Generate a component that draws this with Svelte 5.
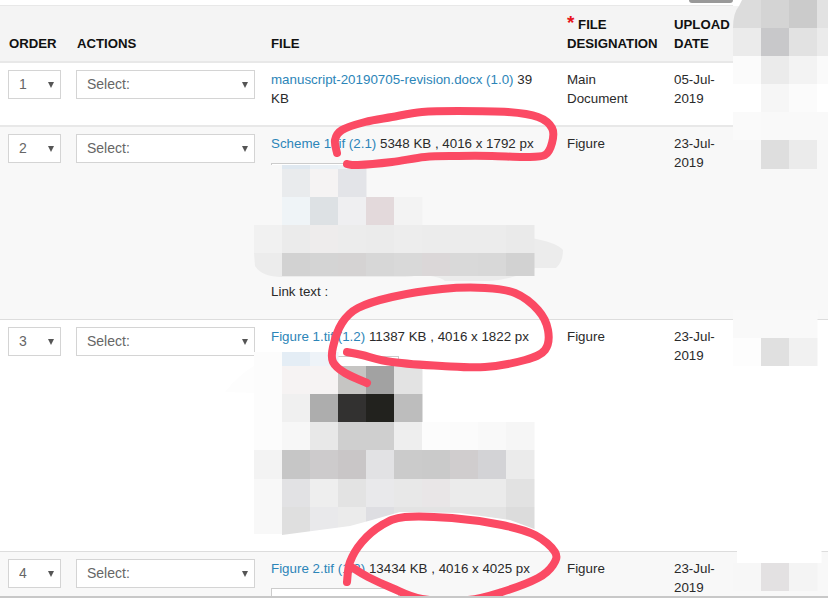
<script>
  const rows = [
    { n: 1, name: 'manuscript-20190705-revision.docx (1.0)', size: '39 KB', kind: 'Main Document', date: '05-Jul-2019' },
    { n: 2, name: 'Scheme 1.tif (2.1)', size: '5348 KB , 4016 x 1792 px', kind: 'Figure', date: '23-Jul-2019', box: 'box-a', link: true },
    { n: 3, name: 'Figure 1.tif (1.2)', size: '11387 KB , 4016 x 1822 px', kind: 'Figure', date: '23-Jul-2019', box: 'box-b' },
    { n: 4, name: 'Figure 2.tif (1.3)', size: '13434 KB , 4016 x 4025 px', kind: 'Figure', date: '23-Jul-2019', box: 'box-b' },
  ];

  // pixelated blur patches: [y, height, first x, cell colours]
  const mosaic = [
    [165, 4, 282, ['#dfe8f0', '#eaf0f5', '#ecf2f6']],
    [169, 28, 282, ['#e9ebed', '#f5f3f3', '#e3e4e8']],
    [197, 28, 282, ['#eff4f7', '#dde1e4', '#efeff1', '#e3d9db', '#f3f3f3']],
    [225, 28, 254, ['#f1f1f1', '#ebebeb', '#eeecec', '#ececec', '#ebebeb', '#ededed', '#ececec', '#ececec', '#ececec', '#eaeaea']],
    [253, 23, 282, ['#d2d2d2', '#d4d4d4', '#d5d3d3', '#d7d7d7', '#d9d9d9', '#dbd7d8', '#d9d9d9', '#d8d8d8', '#d2d2d2']],

    [352, 14, 254, ['#fcfcfc', '#e4edf5', '#eef3f8']],
    [366, 28, 254, ['#fcfcfc', '#f6f3f3', '#f6f3f3', '#c6c5c3', '#a2a2a2', '#e3e3e3']],
    [394, 28, 254, ['#fcfcfc', '#f0f0f0', '#adadad', '#323130', '#22221e', '#bdbdbd']],
    [422, 28, 254, ['#fcfcfc', '#f7f7f7', '#e8e8e8', '#cfcfcf', '#cfcfcf', '#eeeeee', '#fcfcfc', '#fbfbfb', '#f9f9f9', '#f6f6f6']],
    [450, 29, 254, ['#f3f3f3', '#c6c6c6', '#cdcbcc', '#c9c6c7', '#e2e2e4', '#cbcbcb', '#cacaca', '#d0cdce', '#d3d3d6', '#ebebeb']],
    [479, 28, 254, ['#f8f8f8', '#e2e2e4', '#eeeeee', '#e3e3e3', '#e9e9eb', '#e8e8e8', '#e9e6e7', '#ebebeb', '#ebebeb', '#e2e2e2']],
    [507, 28, 254, ['#f8f8f8', '#dfdfdf', '#e9e9eb', '#ebebeb', '#dedee2', '#e3e3e3', '#e3e3e3', '#e3e3e3', '#e3e3e3', '#dcdcdc']],

    [0, 28, 733, ['#dcdcdc', '#d4d4d4', '#cbcbcb', '#e2e2e2']],
    [28, 28, 733, ['#ebebeb', '#c8c8ca', '#e2e2e2', '#ebebeb']],
    [56, 28, 733, ['#fbfbfb', '#ebebeb', '#f3f3f3', '#fafafa']],
    [84, 28, 733, ['#ffffff', '#f6f6f6', '#fbfbfb', '#ffffff']],
    [112, 28, 733, ['#fafafa', '#f9f9f9', '#f9f9f9', '#f9f9f9']],
    [140, 29, 733, ['#f8f8f8', '#dedede', '#ebebeb', '#f8f8f8']],
    [310, 28, 733, ['#f9f9f9', '#f9f9f9', '#f9f9f9']],
    [338, 28, 733, ['#fdfdfd', '#e0e0e0', '#f1f1f1']],
    [540, 23, 737, ['#ffffff', '#ffffff', '#ffffff']],
    [563, 28, 733, ['#f7f7f7', '#e3e1e2', '#f4f4f4']],
  ];

  const cells = mosaic.flatMap(([y, h, x0, colours]) =>
    colours.map((fill, i) => ({ x: x0 + i * 28, y, w: 28.5, h, fill }))
  );

  // pen marks, traced as points and smoothed
  const loops = [
    [[337, 153], [335, 140], [342, 130], [365, 122], [392, 117], [422, 112], [458, 111], [508, 112], [538, 117], [552, 128], [552, 143], [545, 155], [525, 157], [492, 156], [458, 156], [425, 157], [392, 162], [358, 165], [347, 164]],
    [[367, 383], [345, 373], [333, 362], [333, 347], [342, 323], [358, 308], [392, 297], [442, 289], [485, 288], [515, 293], [538, 310], [548, 330], [545, 350], [525, 360], [485, 367], [442, 366], [392, 362], [362, 355], [347, 352]],
    [[347, 582], [350, 562], [362, 542], [382, 525], [405, 517], [452, 518], [502, 525], [535, 535], [555, 552], [553, 565], [538, 578], [502, 592], [468, 600], [422, 599], [392, 588], [368, 577], [353, 568]],
  ];

  function smooth(pts) {
    let d = `M${pts[0][0]} ${pts[0][1]}`;
    for (let i = 0; i < pts.length - 1; i++) {
      const p0 = pts[i - 1] || pts[i];
      const p1 = pts[i];
      const p2 = pts[i + 1];
      const p3 = pts[i + 2] || p2;
      const c1x = p1[0] + (p2[0] - p0[0]) / 6;
      const c1y = p1[1] + (p2[1] - p0[1]) / 6;
      const c2x = p2[0] - (p3[0] - p1[0]) / 6;
      const c2y = p2[1] - (p3[1] - p1[1]) / 6;
      d += ` C${c1x.toFixed(1)} ${c1y.toFixed(1)} ${c2x.toFixed(1)} ${c2y.toFixed(1)} ${p2[0]} ${p2[1]}`;
    }
    return d;
  }
</script>

<div class="page">
  <div class="top-btn"></div>
  <table>
    <colgroup>
      <col style="width: 68px" />
      <col style="width: 195px" />
      <col style="width: 296px" />
      <col style="width: 107px" />
      <col style="width: 66px" />
      <col />
    </colgroup>
    <thead>
      <tr>
        <th>ORDER</th>
        <th>ACTIONS</th>
        <th>FILE</th>
        <th><span class="req">*</span> FILE DESIGNATION</th>
        <th>UPLOAD DATE</th>
        <th></th>
      </tr>
    </thead>
    <tbody>
      {#each rows as row}
        <tr class:even={row.n % 2 === 0} class:first={row.n === 1}>
          <td>
            <span class="select-wrap order">
              <select><option>{row.n}</option></select>
            </span>
          </td>
          <td>
            <span class="select-wrap action">
              <select><option>Select:</option></select>
            </span>
          </td>
          <td>
            <a href="#file">{row.name}</a> {row.size}
            {#if row.box}<div class="preview {row.box}"></div>{/if}
            {#if row.link}<div class="link-text">Link text :</div>{/if}
          </td>
          <td>{row.kind}</td>
          <td>{row.date}</td>
          <td></td>
        </tr>
      {/each}
    </tbody>
  </table>

  <svg class="marks" width="828" height="598" viewBox="0 0 828 598" aria-hidden="true">
    <rect x="254" y="165" width="170" height="117" fill="#f8f8f8" />
    <path fill="#ececec" d="M254 253 L255 266 Q262 277 282 277 L405 277 Q412 277 418 275 Q440 276 445 281 L490 281 Q515 279 535 268 L556 268 Q563 262 563 250 Q556 242 530 238 L254 238 Z" />
    <path fill="#fdfdfd" d="M225 392 Q245 366 282 352 L282 394 Z" />
    {#each cells as c}
      <rect x={c.x} y={c.y} width={c.w} height={c.h} fill={c.fill} />
    {/each}
    <path fill="#f4f4f4" d="M733 6 L733 28 Q733 13 739 6 Z" />
    <path fill="#ffffff" d="M733 0 L733 6 L739 6 L742 0 Z" />
    <path fill="#ffffff" d="M282 535 L350 526 L372 520 L400 512 L460 513 L510 520 L537 530 L552 551 L282 551 Z" />
    <rect x="254" y="534" width="28" height="17" fill="#ffffff" />
    {#each loops as pts}
      <path class="pen" d={smooth(pts)} />
    {/each}
  </svg>
</div>

<style>
  :global(body) {
    margin: 0;
    background: #fff;
  }

  .page {
    position: relative;
    box-sizing: border-box;
    width: 828px;
    height: 598px;
    padding-top: 5px;
    overflow: hidden;
    border-bottom: 2px solid #c8c8c8;
    font-family: "Liberation Sans", Arial, sans-serif;
    font-size: 13.35px;
    line-height: 19px;
    color: #2a2a2a;
  }

  .top-btn {
    position: absolute;
    top: 0;
    left: 689px;
    width: 44px;
    height: 3px;
    background: #999;
    border-radius: 0 0 3px 3px;
  }

  table {
    width: 828px;
    table-layout: fixed;
    border-collapse: separate;
    border-spacing: 0;
    border-top: 1px solid #e8e8e8;
  }

  th {
    height: 57px;
    box-sizing: border-box;
    padding: 0 8px 8px;
    vertical-align: bottom;
    text-align: left;
    font-size: 13.2px;
    font-weight: bold;
    color: #111;
    background: #f4f4f4;
    border-bottom: 2px solid #e8e8e8;
    white-space: normal;
  }
  th:first-child,
  th:nth-child(2) { padding-left: 9px; }

  .req {
    color: #e8141c;
    font-size: 19px;
    line-height: 0;
  }

  td {
    padding: 7px 8px;
    vertical-align: top;
    border-bottom: 1px solid #ddd;
    background: #fff;
  }
  tr.even td { background: #f8f8f8; }
  tr.first td {
    height: 64px;
    box-sizing: border-box;
    border-bottom: 2px solid #e8e8e8;
  }

  a {
    color: #2c85b8;
    text-decoration: none;
  }

  .select-wrap {
    display: block;
    position: relative;
  }
  .select-wrap.order { width: 53px; }
  .select-wrap.action { width: 179px; }
  .select-wrap::after {
    content: "";
    position: absolute;
    top: 12px;
    right: 7px;
    border-left: 3px solid transparent;
    border-right: 3px solid transparent;
    border-top: 6px solid #555;
  }

  select {
    display: block;
    width: 100%;
    height: 29px;
    box-sizing: border-box;
    padding: 0 0 0 10px;
    appearance: none;
    border: 1px solid #d4d4d4;
    border-radius: 0;
    background: #fff;
    font: inherit;
    font-size: 14px;
    color: #666;
  }

  .preview {
    box-sizing: border-box;
    width: 128px;
    margin-top: 10px;
    background: #fff;
    border: 1px solid #ccc;
  }
  .box-a { height: 119px; }
  .box-b { height: 188px; }

  .link-text {
    margin-bottom: 11px;
  }

  .marks {
    position: absolute;
    top: 0;
    left: 0;
    pointer-events: none;
  }
  .pen {
    fill: none;
    stroke: #fb4a64;
    stroke-width: 8;
    stroke-linecap: round;
    stroke-linejoin: round;
  }
</style>
